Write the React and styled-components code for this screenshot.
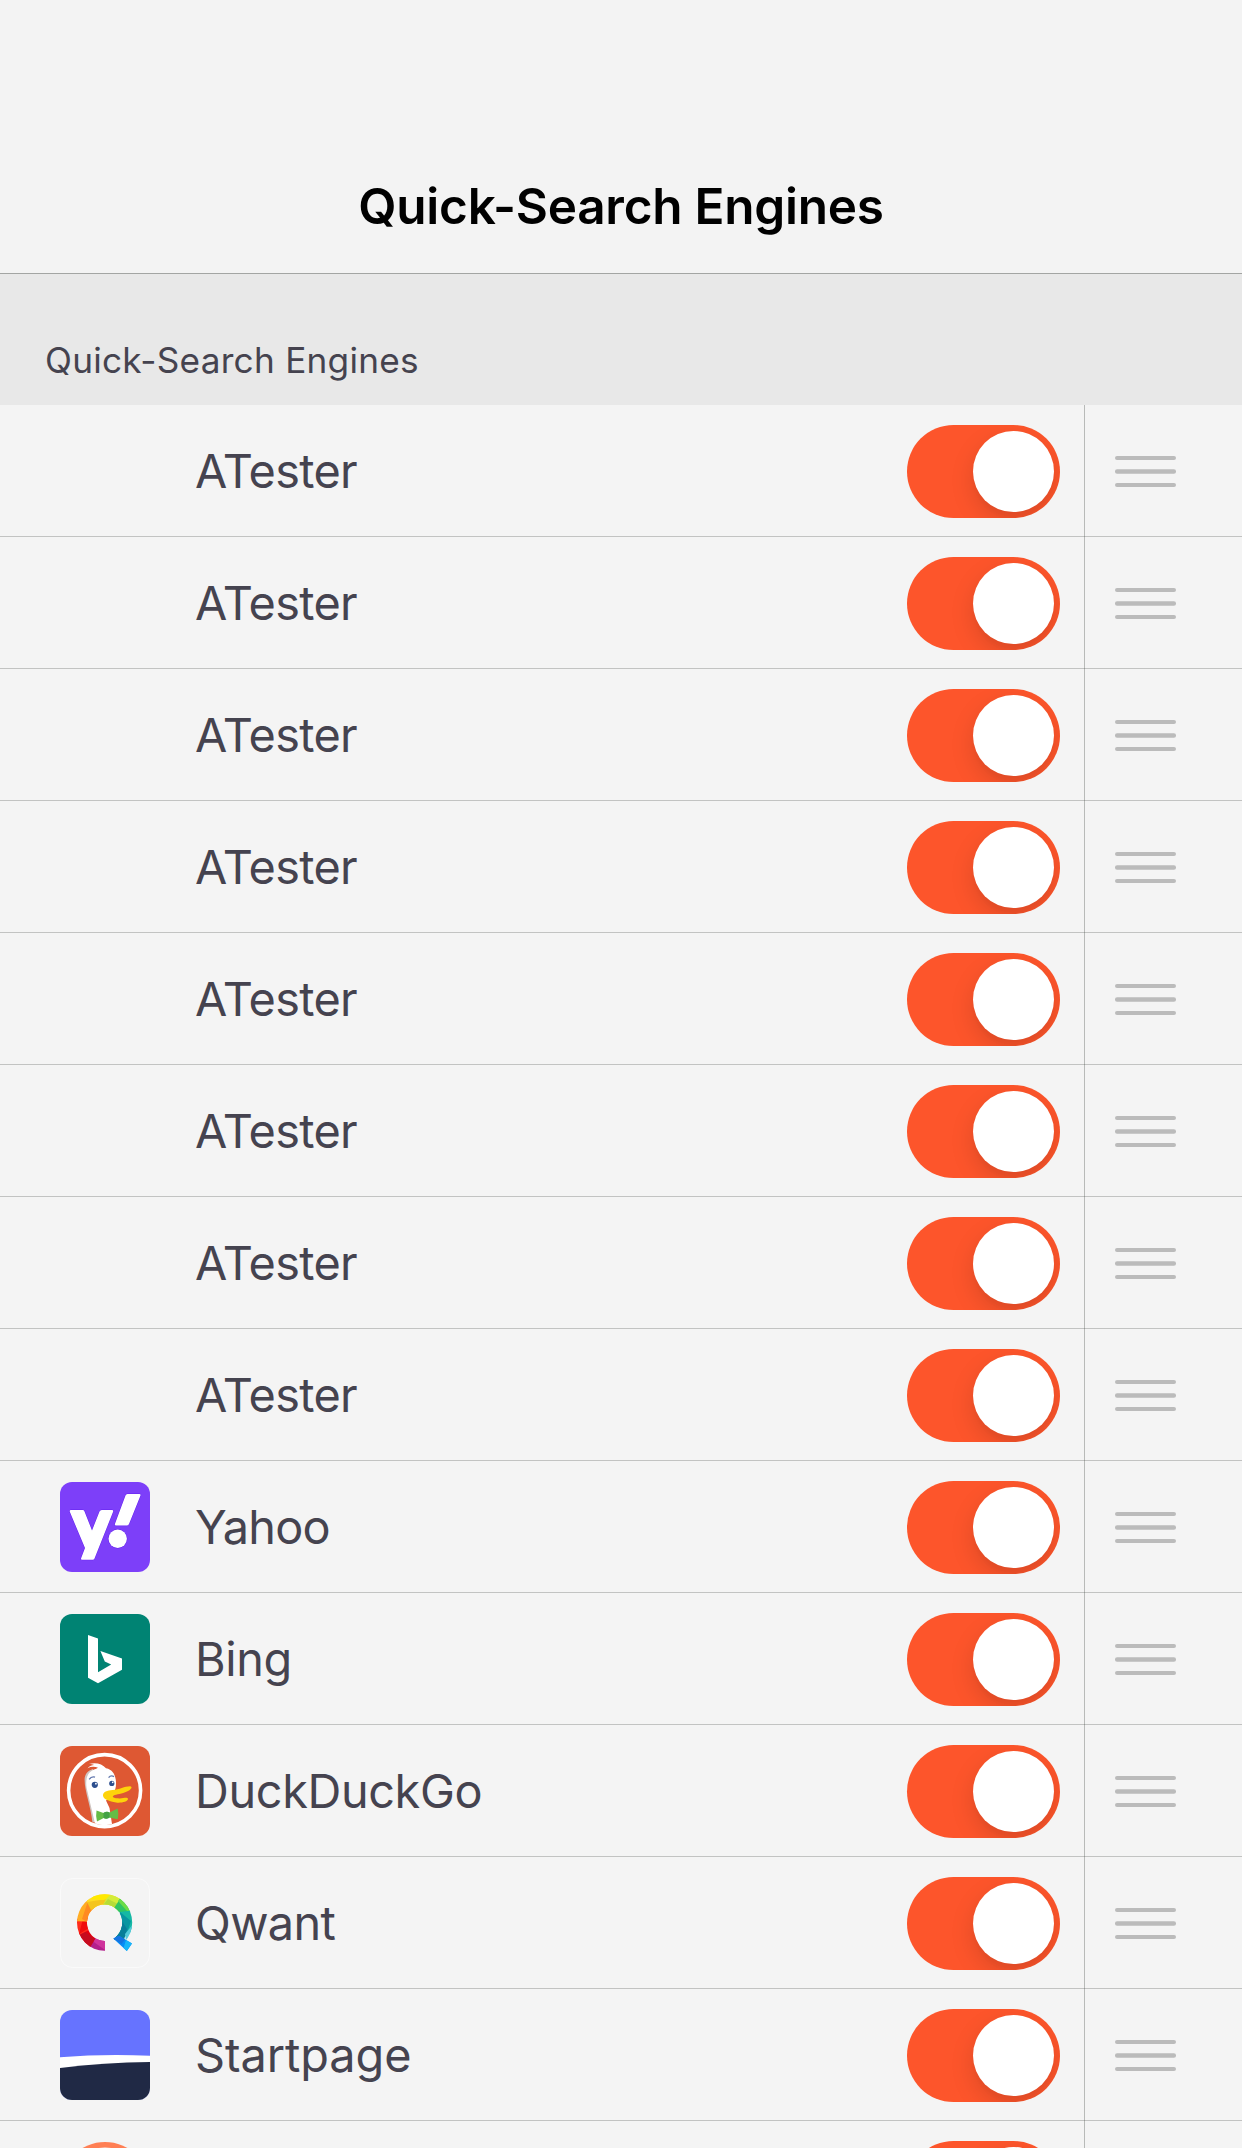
import React from "react";
import styled, { createGlobalStyle } from "styled-components";

const GlobalStyle = createGlobalStyle`
  * { box-sizing: border-box; }
  html, body { margin: 0; padding: 0; background: #f4f4f4; }
  body { overflow: hidden; }
`;

const Screen = styled.main`
  display: flex;
  flex-direction: column;
  width: 1242px;
  height: 2148px;
  overflow: hidden;
  background: #f4f4f4;
  color: #45434f;
  font-family: Inter, "Liberation Sans", sans-serif;
  font-kerning: normal;
`;

const NavBar = styled.header`
  flex: none;
  display: flex;
  justify-content: center;
  height: 274px;
  padding-top: 176px;
  background: #f3f3f3;
  border-bottom: 1px solid #a3a5a3;
`;

const Title = styled.h1`
  margin: 0;
  color: #000;
  font-size: 49.5px;
  font-weight: 600;
  line-height: 60px;
  letter-spacing: -0.25px;
  white-space: nowrap;
`;

const SectionHeader = styled.h2`
  flex: none;
  margin: 0;
  height: 131px;
  padding: 64px 0 0 45px;
  background: #e8e8e8;
  font-size: 35.2px;
  font-weight: 400;
  line-height: 44px;
  letter-spacing: 0.25px;
  white-space: nowrap;
`;

const EngineList = styled.ul`
  flex: none;
  margin: 0;
  padding: 0;
  list-style: none;
`;

const Row = styled.li`
  display: flex;
  align-items: flex-start;
  height: 132px;
  border-bottom: 1px solid #c2c3c2;
`;

const IconSlot = styled.div`
  width: 90px;
  height: 90px;
  margin: 21px 45px 0 60px;
  border-radius: 12px;
  overflow: hidden;

  svg { display: block; }
`;

const Label = styled.span`
  flex: 1;
  padding-top: 37px;
  font-size: 46.8px;
  line-height: 58px;
  letter-spacing: ${(p) => p.$tracking ?? 0}px;
  white-space: nowrap;
`;

const Toggle = styled.button`
  display: flex;
  justify-content: flex-end;
  width: 153px;
  height: 93px;
  margin: 20px 24px 0 0;
  padding: 6px;
  border: 0;
  border-radius: 47px;
  background: #fd552b;
  overflow: hidden;
`;

const Knob = styled.span`
  width: 81px;
  height: 81px;
  border-radius: 50%;
  background: #fff;
  box-shadow: 0 9px 24px rgba(0, 0, 0, 0.13), 0 6px 3px rgba(0, 0, 0, 0.02);
`;

const HandleCell = styled.div`
  width: 158px;
  height: 132px;
  padding: 51px 0 0 30px;
  border-left: 1px solid rgba(60, 64, 60, 0.32);

  svg { display: block; }
`;

const YahooIcon = () => (
  <svg width="90" height="90" viewBox="0 0 90 90">
    <rect width="90" height="90" fill="#7d3ff9" />
    <g fill="#fff" stroke="#6420ee" strokeWidth="1" paintOrder="stroke" strokeLinejoin="round">
      <path d="M11 28H22.5Q24 28 24.5 29.4L32 48.5L39.5 29.6Q40.2 28 41.8 28H52Q53.8 28 53 30L34.5 76.4Q34 77.7 32.6 77.7H22Q20.5 77.7 21.2 76L25 66L9.8 29.8Q9.2 28 11 28Z" />
      <path d="M67.5 12H79.5Q81.2 12 80.5 13.6L69 42Q68.3 43.6 66.7 43.6H56Q54.2 43.6 54.9 42L65.5 13.5Q66 12 67.5 12Z" />
      <circle cx="57.7" cy="56.8" r="9.2" />
    </g>
  </svg>
);

const BingIcon = () => (
  <svg width="90" height="90" viewBox="0 0 90 90">
    <rect width="90" height="90" fill="#008373" />
    <path fill="#fff" d="M28 21L38 24.4V58.2L51.2 50.4L44.8 47.5L40.4 37L62 44.4V55.8L38 69.2L28 63.8Z" />
  </svg>
);

const DuckIcon = () => (
  <svg width="90" height="90" viewBox="0 0 90 90">
    <rect width="90" height="90" fill="#de5833" />
    <path fill="#cfc4c0" d="M24.6 34C24.6 28 28 24.5 33 23L42 77.6L32.4 76C31 61 24.6 45 24.6 34Z" />
    <path fill="#fff" d="M35 77.5L26.6 42C25.5 34 26.5 27 34 23.6C36.5 22.5 37.5 22.3 38 21.8C35 20.5 31 20.5 27.5 22.2C29.5 19.8 32 19 34 19C32.5 18 30.8 17.8 29 17.9C36 16 42.5 18 46 22.2C52.5 23.5 55.6 28.5 56 36C56.2 41 55.4 44 53 48L46 54.5L49.5 62L52 78Q44 80.5 35 77.5Z" />
    <circle cx="44.6" cy="44.6" r="36" fill="none" stroke="#fff" strokeWidth="3.6" />
    <path fill="#fed30a" d="M43 49.8C42.6 46 47.5 44.2 52.5 44C59.5 43.7 64.5 40.2 70 40.2C73 40.4 71.5 43.5 67 45.6C62 48 56.5 48.2 53.4 49.7C51.5 51.2 54.5 52.2 59.5 52.4C63.5 52.5 67.5 50.8 68 53C67.8 55.7 61 57.2 56 56.5C49.5 55.5 43.4 53.5 43 49.8Z" />
    <circle cx="34.8" cy="38.8" r="3.1" fill="#2d4f8e" />
    <circle cx="51.8" cy="37.4" r="2.6" fill="#2d4f8e" />
    <circle cx="35.9" cy="37.7" r=".9" fill="#fff" />
    <circle cx="52.7" cy="36.4" r=".8" fill="#fff" />
    <path d="M29.2 33.4Q31.5 30 35 31.2M48.6 31.6Q50.8 28.8 54 30.6" fill="none" stroke="#6277ad" strokeWidth="1.4" />
    <path fill="#65bc46" d="M36.5 64.4L43.5 67Q46.5 65 49.5 66.4L57.7 62.5Q59 68 57.7 73.2L49 71.6Q46.5 73.6 43.7 72L37 75.4Q35.5 70 36.5 64.4Z" />
    <path fill="#43a244" d="M43.4 67Q46.4 64.8 49.5 66.4V71.7Q46.5 73.6 43.6 72Z" />
  </svg>
);

const QwantIcon = () => (
  <svg width="90" height="90" viewBox="0 0 90 90">
    <defs>
      <clipPath id="qwant-ring">
        <path
          clipRule="evenodd"
          d="M44.6 16.2A27.6 28.3 0 0 1 44.6 72.8A27.6 28.3 0 0 1 44.6 16.2ZM44.6 26.4A17.7 18.3 0 0 0 44.6 63A17.7 18.3 0 0 0 44.6 26.4Z"
        />
      </clipPath>
    </defs>
    <rect x=".5" y=".5" width="89" height="89" rx="12" fill="#f4f4f4" stroke="#fafafa" />
    <g clipPath="url(#qwant-ring)">
      <path fill="#b3208c" d="M45 44V76H24L36 59Z" />
      <path fill="#cf339c" d="M45 62V72L31 62L35 58Z" />
      <path fill="#e3000f" d="M45 44L29 71L14 57Z" />
      <path fill="#c60b1f" d="M18 57L24 53L35 61L29 71Z" />
      <path fill="#ff2b1c" d="M45 44L19 57L12 42L28 38Z" />
      <path fill="#f00d0d" d="M23 41L29 38V50L19 56Z" />
      <path fill="#ffad24" d="M45 44L12 43L20 16L31 24Z" />
      <path fill="#ff8a22" d="M28 23L22 41L27 44L36 27Z" />
      <path fill="#ffdc25" d="M45 44L27 24V12H62L58 27Z" />
      <path fill="#f4c51e" d="M27 24L47 21L43 28L31 32Z" />
      <path fill="#ffe900" d="M36 14H49L54 19L43 22L31 21Z" />
      <path fill="#d3ec39" d="M46 21L52 15L63 19L58 33L43 27Z" />
      <path fill="#b5dc38" d="M43 27L48 21L60 27L57 33Z" />
      <path fill="#2fc563" d="M45 44L58 24L61 18L74 34L60 34Z" />
      <path fill="#6bdc48" d="M58 23L62 18L73 34L67 33Z" />
      <path fill="#15b8a4" d="M60 34L74 32V52L64 59H57V44Z" />
      <path fill="#0895a0" d="M60 34L71 43L66 58L56 62V44Z" />
      <path fill="#087d98" d="M62 43L67 51L64 62H54Z" />
      <path fill="#55cadb" d="M74 45V60L66 63L65 56Z" />
      <path fill="#f4f4f4" d="M45 62H57L62 74H45Z" />
    </g>
    <path fill="#078df6" d="M53.3 60.6L59 57.8L72 65.6L66.8 73Z" />
    <path fill="#1574e0" d="M53.3 60.6L59 57.8L65 61.6L61.5 66Z" />
    <path fill="#17b6f9" d="M66 62L72 65.6L66.8 73L63.6 70Z" />
  </svg>
);

const StartpageIcon = () => (
  <svg width="90" height="90" viewBox="0 0 90 90">
    <rect width="90" height="90" fill="#6673ff" />
    <path d="M0 47.2Q45 43.7 90 45.8V90H0Z" fill="#fff" />
    <path d="M0 58Q44 52.6 90 52V90H0Z" fill="#202945" />
  </svg>
);

const RingIcon = () => (
  <svg width="90" height="90" viewBox="0 0 90 90">
    <circle cx="45" cy="45" r="45" fill="#ff7f54" />
    <circle cx="45" cy="45" r="39.5" fill="#f4f4f4" />
  </svg>
);

const Handle = () => (
  <svg width="61" height="31" viewBox="0 0 61 31" fill="#bbb">
    <rect width="61" height="4" rx="2" />
    <rect y="13.2" width="61" height="4.6" rx="2.1" />
    <rect y="27" width="61" height="4" rx="2" />
  </svg>
);

const engines = [
  ...Array.from({ length: 8 }, () => ({ name: "ATester", tracking: -0.65 })),
  { name: "Yahoo", Icon: YahooIcon, tracking: -0.75 },
  { name: "Bing", Icon: BingIcon, tracking: -0.4 },
  { name: "DuckDuckGo", Icon: DuckIcon, tracking: -0.35 },
  { name: "Qwant", Icon: QwantIcon, tracking: -0.65 },
  { name: "Startpage", Icon: StartpageIcon, tracking: -0.05 },
  { name: "", Icon: RingIcon },
];

export default function App() {
  return (
    <>
      <GlobalStyle />
      <Screen>
        <NavBar>
          <Title>Quick-Search Engines</Title>
        </NavBar>
        <SectionHeader>Quick-Search Engines</SectionHeader>
        <EngineList>
          {engines.map(({ name, Icon, tracking }, i) => (
            <Row key={i}>
              <IconSlot>{Icon && <Icon />}</IconSlot>
              <Label $tracking={tracking}>{name}</Label>
              <Toggle type="button" role="switch" aria-checked="true">
                <Knob />
              </Toggle>
              <HandleCell>
                <Handle />
              </HandleCell>
            </Row>
          ))}
        </EngineList>
      </Screen>
    </>
  );
}
